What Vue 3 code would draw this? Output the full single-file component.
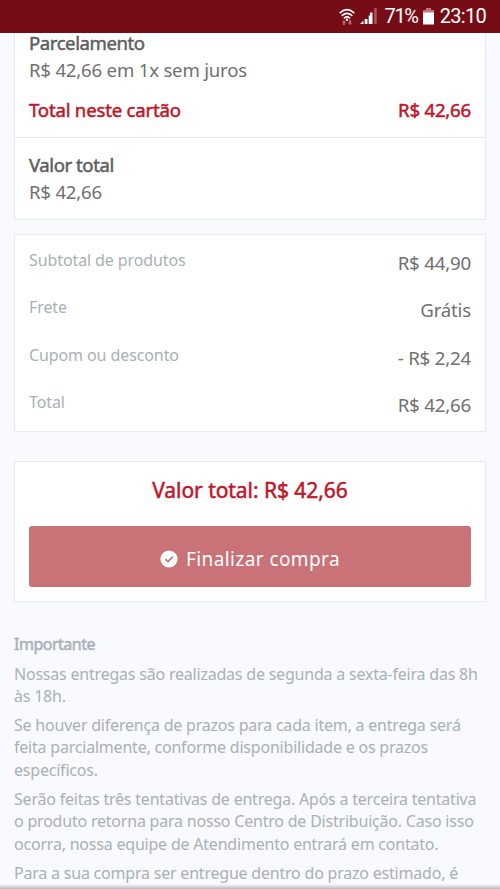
<script setup>
const rows = [
  ['Subtotal de produtos', 'R$ 44,90'],
  ['Frete', 'Grátis'],
  ['Cupom ou desconto', '- R$ 2,24'],
  ['Total', 'R$ 42,66'],
]
const notes = [
  ['Nossas entregas são realizadas de segunda a sexta-feira das 8h', 'às 18h.'],
  ['Se houver diferença de prazos para cada item, a entrega será', 'feita parcialmente, conforme disponibilidade e os prazos', 'específicos.'],
  ['Serão feitas três tentativas de entrega. Após a terceira tentativa', 'o produto retorna para nosso Centro de Distribuição. Caso isso', 'ocorra, nossa equipe de Atendimento entrará em contato.'],
  ['Para a sua compra ser entregue dentro do prazo estimado, é', 'necessário que haja uma pessoa autorizada para receber'],
]
</script>

<template>
  <div class="screen">
    <header class="status">
      <svg class="wifi" viewBox="0 0 16 18" width="16" height="18">
        <g fill="none" stroke="#fff" stroke-width="1.6" stroke-linecap="round">
          <path d="M1.2 4.6Q8 -1.4 14.8 4.6" />
          <path d="M3.2 7.4Q8 3.2 12.8 7.4" />
          <path d="M5.3 10Q8 7.8 10.7 10" />
        </g>
        <circle cx="8" cy="11.8" r="1.2" fill="#fff" />
        <path d="M5 12L7.5 14.5H6V17H4V14.5H2.5ZM11 17L8.5 14.5H10V12H12V14.5H13.5Z" fill="#b9636b" />
      </svg>
      <svg class="signal" viewBox="0 0 17 17" width="17" height="17">
        <path d="M0 16L3.5 12.5V16Z M4.7 11H7.5V16H4.7Z M8.7 7.5H11.2V16H8.7Z" fill="#fff" />
        <path d="M10 4.5H12.5V16H10Z" fill="#fff" />
        <path d="M14 0H16.8V16H14Z" fill="#a94d56" />
      </svg>
      <span class="pct">71%</span>
      <svg class="battery" viewBox="0 0 11 17" width="11" height="17">
        <path d="M3 0H8V2H11V5H0V2H3Z" fill="#b9777d" />
        <path d="M0 4.5H11V16.5H0Z" fill="#fff" />
      </svg>
      <span class="time">23:10</span>
    </header>

    <main>
      <section class="card payment">
        <div class="part installments">
          <div class="strong first">Parcelamento</div>
          <div class="value">R$ 42,66 em 1x sem juros</div>
          <div class="card-total"><span>Total neste cartão</span><span class="paid">R$ 42,66</span></div>
        </div>
        <div class="part grand">
          <div class="strong">Valor total</div>
          <div class="value">R$ 42,66</div>
        </div>
      </section>

      <section class="card summary">
        <div v-for="r in rows" :key="r[0]" class="row">
          <span class="label">{{ r[0] }}</span>
          <span class="amount">{{ r[1] }}</span>
        </div>
      </section>

      <section class="card checkout">
        <div class="sum">Valor total: R$ 42,66</div>
        <button class="buy">
          <svg viewBox="0 0 18 18" width="18" height="18">
            <circle cx="9" cy="9" r="8.6" fill="#fff" />
            <path d="M5.3 9.2L8 11.6L12.8 6.6" fill="none" stroke="#c97277" stroke-width="1.6" />
          </svg>
          <span>Finalizar compra</span>
        </button>
      </section>

      <section class="notes">
        <h2>Importante</h2>
        <p v-for="(n, i) in notes" :key="i"><span v-for="l in n" :key="l">{{ l }}</span></p>
      </section>
    </main>
    <div class="shade"></div>
  </div>
</template>

<style>
body { margin: 0; overflow: hidden; }
</style>

<style scoped>
.screen {
  position: relative;
  width: 500px;
  height: 889px;
  overflow: hidden;
  background: #f8fafd;
  font-family: "Noto Sans", "Open Sans", sans-serif;
  color: #707070;
}
.status {
  box-sizing: border-box;
  height: 33px;
  padding-right: 14px;
  background: #760d16;
  display: flex;
  align-items: center;
  justify-content: flex-end;
  color: #fff;
  font: 20px/33px Roboto, sans-serif;
}
.signal { margin: 0 7px 0 5px; }
.battery { margin: 0 6px 0 4px; }
.pct { letter-spacing: -1.3px; margin-right: 1px; }
.time { letter-spacing: -0.7px; }
main { padding: 0 14px; }
.card {
  box-sizing: border-box;
  background: #fff;
  border: 1px solid #e6eaee;
}
.payment { border-top: 0; height: 187px; }
.part { padding: 0 14px; font-size: 18.6px; line-height: 26.5px; }
.installments {
  box-sizing: border-box;
  height: 105px;
  border-bottom: 1px solid #e6eaee;
}
.first { margin-top: -3px; }
.installments { display: flow-root; }
.grand { padding-top: 14px; }
.value { letter-spacing: -0.2px; }
.strong, .card-total, .sum, h2 { -webkit-text-stroke: 0.5px currentColor; }
.strong { letter-spacing: -0.45px; color: #5f5f5f; }
.card-total {
  margin-top: 14px;
  display: flex;
  justify-content: space-between;
  color: #c01629;
  letter-spacing: -0.2px;
}
.summary {
  margin-top: 14px;
  height: 198px;
  padding: 12px 14px 0;
}
.row { display: flex; justify-content: space-between; height: 47.3px; }
.label { font-size: 16px; line-height: 26px; letter-spacing: -0.1px; color: #a9b0b6; }
.amount { font-size: 18.7px; line-height: 32px; letter-spacing: -0.2px; }
.checkout { margin-top: 29px; height: 141px; padding: 10px 14px 0; }
.sum {
  height: 54px;
  text-align: center;
  font-size: 21px;
  line-height: 36px;
  letter-spacing: -0.05px;
  color: #c01629;
}
.buy {
  box-sizing: border-box;
  width: 100%;
  height: 61px;
  padding: 4px 0 0;
  border: 0;
  border-radius: 3px;
  background: #c97277;
  display: flex;
  align-items: center;
  justify-content: center;
  gap: 8px;
  color: #fff;
  font-family: "Noto Sans", sans-serif;
  font-size: 19px;
  letter-spacing: 0.4px;
}
.notes { padding-top: 31px; font-size: 16px; line-height: 22.2px; letter-spacing: -0.21px; color: #a9b0b6; }
h2 { margin: 0; font-size: 16px; font-weight: 400; line-height: 22.2px; letter-spacing: -0.5px; }
p { margin: 7.3px 0 0; white-space: nowrap; }
p span { display: block; }
.shade {
  position: absolute;
  left: 0;
  right: 0;
  bottom: 0;
  height: 5px;
  background: linear-gradient(rgba(90, 90, 90, 0), rgba(90, 90, 90, 0.4));
}
</style>
